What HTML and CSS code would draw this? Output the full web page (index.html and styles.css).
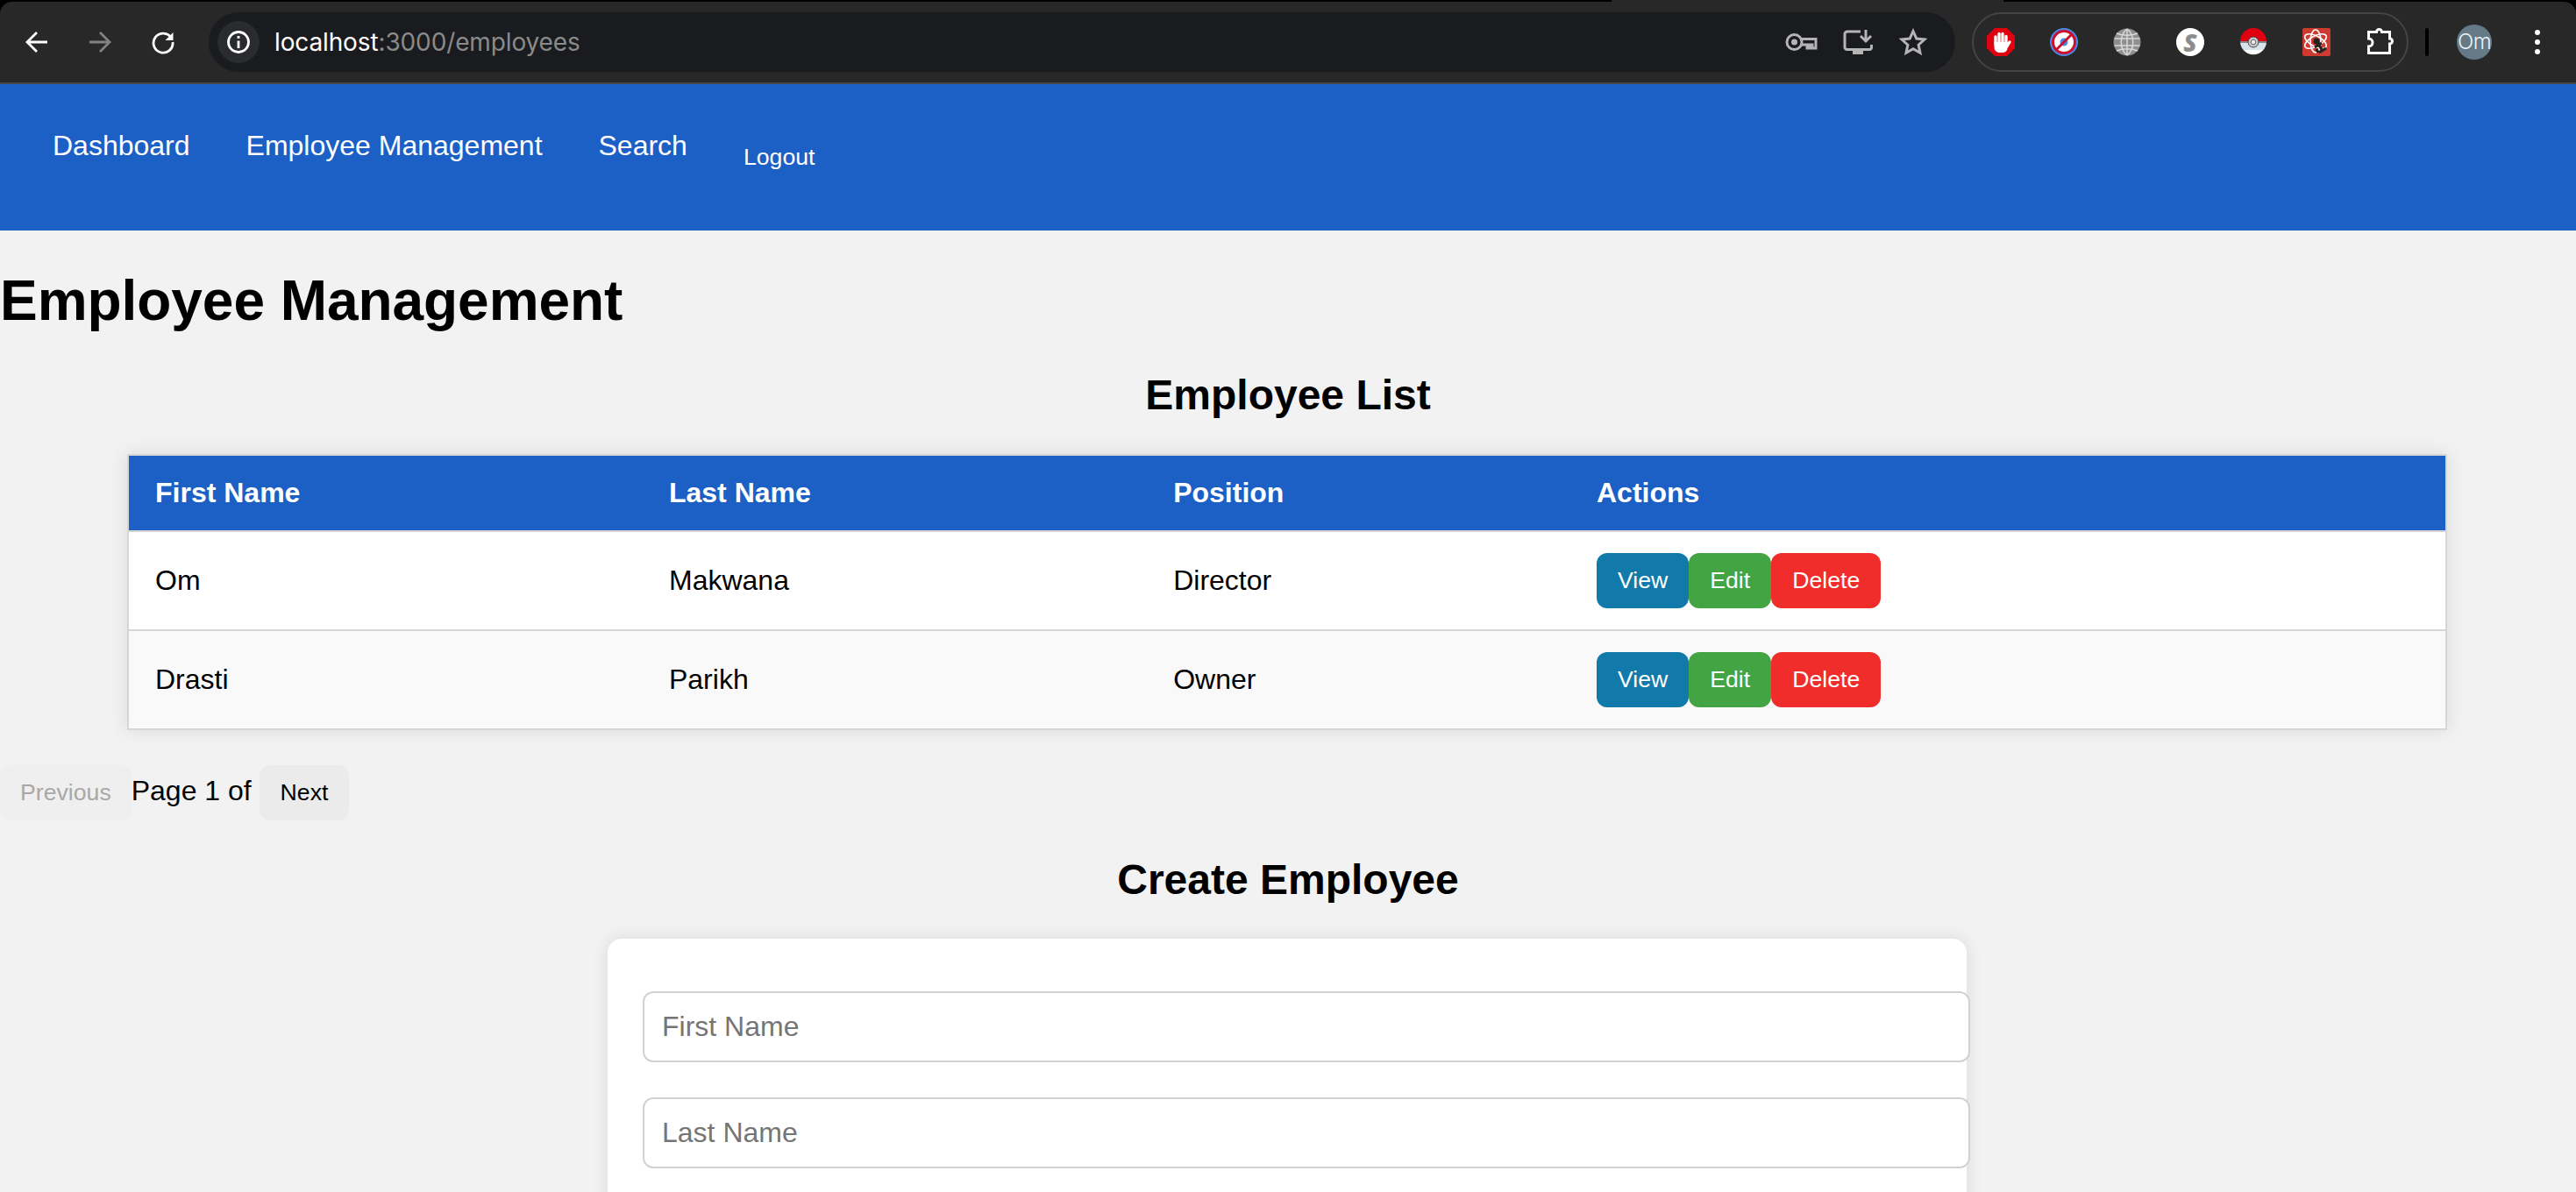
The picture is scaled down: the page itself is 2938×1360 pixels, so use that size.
FILE: index.html
```html
<!DOCTYPE html>
<html lang="en">
<head>
<meta charset="utf-8">
<title>Employee Management</title>
<link rel="stylesheet" href="styles.css">
</head>
<body>
<header class="chrome">
  <div class="strip"><span class="strip-tab"></span></div>
  <div class="toolbar">
    <div class="nav-icons">
      <span class="tool"><svg width="28" height="28" viewBox="0 0 28 28" class="ico"><path d="M26 14H4M14 3L3 14l11 11"/></svg></span>
      <span class="tool dim"><svg width="28" height="28" viewBox="0 0 28 28" class="ico"><path d="M2 14h22M14 3l11 11-11 11"/></svg></span>
      <span class="tool"><svg width="28" height="28" viewBox="0 0 28 28" class="ico"><path d="M23.500 9.500A11 11 0 1 0 25 14"/><path class="solid" d="M25.500 3v9h-9z"/></svg></span>
    </div>
    <div class="omnibox">
      <span class="chip"><svg width="28" height="28" viewBox="0 0 28 28" class="ico"><circle cx="14" cy="14" r="11.500"/><path d="M14 12.500V21"/><path d="M14 7v3"/></svg></span>
      <span class="url">localhost<span class="url-dim">:3000/employees</span></span>
      <span class="omni-actions">
        <svg width="38" height="22" viewBox="0 0 38 22" class="ico gray key"><circle cx="10.500" cy="11" r="8.500"/><circle class="solid" cx="10.500" cy="11" r="3.500"/><path d="M19 7.500h16v10.500h-4v-4h-3v4h-3v-4h-6"/></svg>
        <svg width="34" height="30" viewBox="0 0 34 30" class="ico gray"><path d="M20 3H5a3 3 0 0 0-3 3v15a2.500 2.500 0 0 0 2.500 2.500h26a2.500 2.500 0 0 0 2-2.500v-3"/><path class="solid" d="M11 24h12v5H11z"/><path d="M26 1v12M20 8l6 6 6-6"/></svg>
        <svg width="32" height="32" viewBox="0 0 32 32" class="ico gray"><path d="M16 3.500l3.800 8.500 9.200 1-6.900 6.200 1.900 9.100-8-4.600-8 4.600 1.900-9.100L3 13l9.200-1z"/></svg>
      </span>
    </div>
    <div class="extensions">
      <span class="ext"><svg width="34" height="34" viewBox="0 0 34 34"><path class="abp-red" d="M10 1h14l9 9v14l-9 9H10l-9-9V10z"/><path class="hand-finger" d="M11 20V11M15 18V7.500M19 18V7.500M23 20V10.500M24 22l3-5"/><path class="white-fill" d="M9.500 17h15v7c0 3-2.500 5-5 5h-4c-3.500 0-6-2.500-6-6z"/></svg></span>
      <span class="ext"><svg width="34" height="34" viewBox="0 0 34 34"><circle class="ring-blue" cx="17" cy="17" r="16"/><circle class="white-fill" cx="17" cy="17" r="13.500"/><circle class="dot-blue" cx="17" cy="17" r="4.500"/><circle class="ring-red" cx="17" cy="17" r="12.500"/><path class="ring-red" d="M8 26L26 8"/></svg></span>
      <span class="ext"><svg width="32" height="32" viewBox="0 0 32 32"><circle class="globe-fill" cx="16" cy="16" r="15.500"/><path class="globe-line" d="M16 1v30M1.500 12h29M1.500 20h29M4 6c7 3 17 3 24 0M4 26c7-3 17-3 24 0M16 1C7 8 7 24 16 31M16 1c9 7 9 23 0 30"/></svg></span>
      <span class="ext"><span class="s-badge">S</span></span>
      <span class="ext"><svg width="32" height="32" viewBox="0 0 32 32"><path class="poke-red" d="M1 15a15 15 0 0 1 30 0z"/><path class="poke-pale" d="M1 15h30a15 15 0 0 1-3.600 10H4.600A15 15 0 0 1 1 15z"/><path class="white-fill" d="M4.600 25h22.800A15 15 0 0 1 4.600 25z"/><path class="poke-line" d="M1 16h30"/><circle class="poke-hub" cx="16" cy="16" r="6"/><circle class="poke-inner" cx="16" cy="16" r="2.800"/></svg></span>
      <span class="ext"><svg width="32" height="32" viewBox="0 0 32 32"><rect class="atom-bg" width="32" height="32" rx="2"/><g class="atom-line"><ellipse cx="15" cy="15" rx="13.500" ry="6" transform="rotate(28 15 15)"/><ellipse cx="15" cy="15" rx="13.500" ry="6" transform="rotate(-28 15 15)"/><ellipse cx="15" cy="15" rx="6" ry="13"/></g><circle class="atom-head" cx="16" cy="15" r="3.500"/><path class="atom-man" d="M16 15l7 11M14 22l8-5M19 28l8-5M16 24l2 4"/></svg></span>
      <span class="ext"><svg width="32" height="32" viewBox="-2 2 32 32" class="ico puzzle"><path d="M1.500 6.500h9a3 3 0 0 1 6 0h9V14a3 3 0 0 1 0 6v10.500h-24V23a4.500 4.500 0 0 0 0-9z"/></svg></span>
    </div>
    <span class="divider"></span>
    <span class="avatar">Om</span>
    <span class="menu"><i></i><i></i><i></i></span>
  </div>
</header>

<nav class="topnav">
  <a class="topnav-link" href="#">Dashboard</a>
  <a class="topnav-link" href="#">Employee Management</a>
  <a class="topnav-link" href="#">Search</a>
  <button class="logout" type="button">Logout</button>
</nav>

<main>
  <h1>Employee Management</h1>
  <h2>Employee List</h2>
  <table class="employees">
    <thead>
      <tr><th>First Name</th><th>Last Name</th><th>Position</th><th>Actions</th></tr>
    </thead>
    <tbody>
      <tr>
        <td>Om</td><td>Makwana</td><td>Director</td>
        <td><button class="act view" type="button">View</button><button class="act edit" type="button">Edit</button><button class="act del" type="button">Delete</button></td>
      </tr>
      <tr class="alt">
        <td>Drasti</td><td>Parikh</td><td>Owner</td>
        <td><button class="act view" type="button">View</button><button class="act edit" type="button">Edit</button><button class="act del" type="button">Delete</button></td>
      </tr>
    </tbody>
  </table>
  <div class="pager"><button class="page-btn disabled" type="button" disabled>Previous</button><span>Page 1 of </span><button class="page-btn" type="button">Next</button></div>
  <h2>Create Employee</h2>
  <form class="card">
    <input class="field" type="text" placeholder="First Name">
    <input class="field" type="text" placeholder="Last Name">
    <input class="field" type="text" placeholder="Position">
  </form>
</main>
</body>
</html>
```
FILE: styles.css
```css
html, body { margin: 0; padding: 0; height: 1360px; overflow: hidden; }
body { background: #f2f2f2; color: #000; font-family: "Liberation Sans", Arial, sans-serif; font-size: 32px; }
button, input { font-family: "Liberation Sans", Arial, sans-serif; }

.chrome { background: #000; height: 96px; }
.strip { height: 2px; display: flex; }
.strip-tab { margin-left: 1838px; width: 447px; background: #282828; }
.toolbar { height: 94px; box-sizing: border-box; background: #282828; border-bottom: 2px solid #464646; border-radius: 14px 14px 0 0; display: flex; align-items: center; }
.nav-icons { display: flex; width: 238px; padding-left: 6px; box-sizing: border-box; }
.tool { width: 72px; display: flex; justify-content: center; }
.dim { opacity: .42; }
.ico { fill: none; stroke: #fff; stroke-width: 2.8; display: block; }
.ico .solid { fill: #fff; stroke: none; }
.ico.gray { stroke: #b4b4b4; stroke-width: 3; }
.ico.gray .solid { fill: #b4b4b4; }
.ico.gray.key { margin-right: -2px; }
.ico.puzzle { stroke-width: 3; overflow: visible; }

.omnibox { width: 1992px; height: 68px; background: #1a1b1e; border-radius: 34px; display: flex; align-items: center; box-sizing: border-box; padding-left: 10px; padding-right: 32px; }
.chip { width: 48px; height: 48px; border-radius: 24px; background: #2a2b2e; display: flex; align-items: center; justify-content: center; }
.url { margin-left: 17px; font-family: Inter, sans-serif; font-size: 28px; letter-spacing: -0.13px; color: #fff; }
.url-dim { color: #8a8a8a; }
.omni-actions { margin-left: auto; display: flex; align-items: center; gap: 30px; }

.extensions { margin-left: 19px; width: 498px; height: 68px; box-sizing: border-box; border: 2px solid #444; border-radius: 34px; display: flex; align-items: center; gap: 36px; padding-left: 13px; }
.ext { width: 36px; height: 36px; flex: none; display: flex; align-items: center; justify-content: center; }
.ext svg { display: block; flex: none; }
.abp-red { fill: #e0000f; }
.white-fill { fill: #fff; }
.hand-finger { fill: none; stroke: #fff; stroke-width: 3.4; stroke-linecap: round; }
.ring-blue { fill: #4a8ae8; }
.dot-blue { fill: #4a8ae8; }
.ring-red { fill: none; stroke: #c8102e; stroke-width: 3; }
.globe-fill { fill: #8f8f8f; }
.globe-line { fill: none; stroke: #d8d8d8; stroke-width: 1.5; }
.s-badge { width: 32px; height: 32px; border-radius: 16px; background: #fff; color: #8c8c8c; font-family: "Open Sans", sans-serif; font-weight: 800; font-style: italic; font-size: 28px; line-height: 32px; text-align: center; }
.poke-red { fill: #e0000f; }
.poke-pale { fill: #d5e3ea; }
.poke-line { stroke: #333; stroke-width: 1; }
.poke-hub { fill: #c8c8c8; stroke: #444; stroke-width: 1; }
.poke-inner { fill: #eee; stroke: #666; stroke-width: 1; }
.atom-bg { fill: #cc3a30; }
.atom-line { fill: none; stroke: #fff; stroke-width: 1.6; }
.atom-head { fill: #222; }
.atom-man { fill: none; stroke: #222; stroke-width: 3; }

.divider { margin-left: 19px; width: 4px; height: 32px; background: #000; border-radius: 2px; }
.avatar { margin-left: 32px; width: 40px; height: 40px; border-radius: 20px; background: #647b87; color: #eef2f4; font-family: Inter, sans-serif; font-weight: 300; font-size: 24px; letter-spacing: -0.6px; line-height: 40px; text-align: center; }
.menu { margin-left: 49px; display: flex; flex-direction: column; gap: 5px; }
.menu i { display: block; width: 6px; height: 6px; border-radius: 3px; background: #fff; }

.topnav { background: #1c60c6; height: 167px; box-sizing: border-box; padding: 52px 0 0 60px; display: flex; align-items: flex-start; gap: 64px; }
.topnav-link { color: #fff; text-decoration: none; font-size: 32px; }
.logout { background: none; border: none; padding: 0; color: #fff; font-size: 26.67px; margin-top: 16px; }

h1 { font-size: 64px; font-weight: 700; margin: 43px 0; letter-spacing: -0.05px; }
h2 { font-size: 48px; font-weight: 700; margin: 40px 0; text-align: center; }

.employees { width: 2646px; margin: 40px 0 40px 145px; border-collapse: collapse; background: #fff; box-shadow: 0 0 20px rgba(0,0,0,.1); border: 2px solid #d6d6d6; }
.employees th { background: #1c60c6; color: #fff; text-align: left; padding: 24px 30px; border-bottom: 2px solid #d6d6d6; }
.employees td { padding: 24px 30px; border-bottom: 2px solid #d6d6d6; }
.alt { background: #f9f9f9; }

.act { border: none; border-radius: 12px; color: #fff; font-size: 26.67px; padding: 16px 24px; }
.view { background: #117aab; }
.edit { background: #43a443; }
.del { background: #f02d2a; }

.page-btn { border: none; border-radius: 12px; background: #ebebeb; color: #000; font-size: 26.67px; padding: 16px 24px; }
.page-btn.disabled { background: #efefef; color: #a8a8a8; padding: 16px 23px; }

.card { width: 1550px; box-sizing: border-box; margin: 40px 0 40px 693px; padding: 60px 40px; background: #fff; border-radius: 16px; box-shadow: 0 0 20px rgba(0,0,0,.1); display: flex; flex-direction: column; gap: 40px; }
.field { width: 100%; box-sizing: content-box; padding: 20px; border: 2px solid #d2d2d2; border-radius: 12px; font-size: 32px; background: #fff; }
.field::placeholder { color: #757575; }
```
